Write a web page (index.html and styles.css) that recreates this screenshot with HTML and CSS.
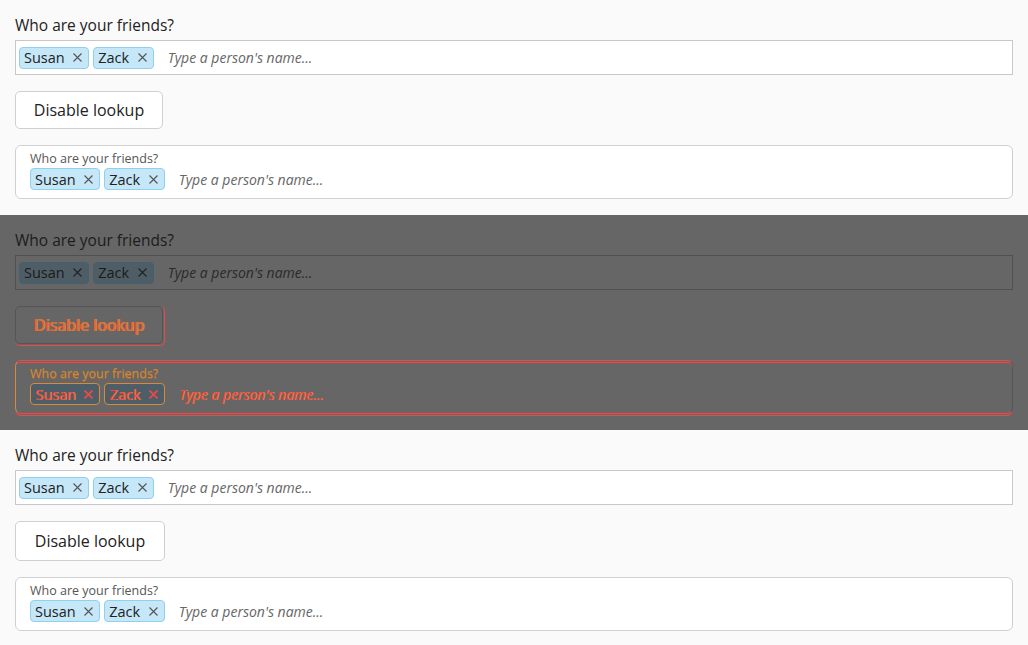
FILE: index.html
```html
<!DOCTYPE html>
<html>
<head>
<meta charset="utf-8">
<link rel="stylesheet" href="styles.css">
</head>
<body>
<section class="panel">
  <div class="label">Who are your friends?</div>
  <div class="input">
    <span class="chip">Susan <svg class="x" viewBox="0 0 9 9"><path d="M0.5 0.5L8.5 8.5M8.5 0.5L0.5 8.5"/></svg></span>
    <span class="chip">Zack <svg class="x" viewBox="0 0 9 9"><path d="M0.5 0.5L8.5 8.5M8.5 0.5L0.5 8.5"/></svg></span>
    <span class="ph">Type a person's name...</span>
  </div>
  <div class="btnrow"><button class="btn">Disable lookup</button></div>
  <div class="field">
    <div class="flabel">Who are your friends?</div>
    <div class="frow">
      <span class="chip">Susan <svg class="x" viewBox="0 0 9 9"><path d="M0.5 0.5L8.5 8.5M8.5 0.5L0.5 8.5"/></svg></span>
      <span class="chip">Zack <svg class="x" viewBox="0 0 9 9"><path d="M0.5 0.5L8.5 8.5M8.5 0.5L0.5 8.5"/></svg></span>
      <span class="ph">Type a person's name...</span>
    </div>
  </div>
</section>
<section class="panel diff">
  <div class="label">Who are your friends?</div>
  <div class="input">
    <span class="chip">Susan <svg class="x" viewBox="0 0 9 9"><path d="M0.5 0.5L8.5 8.5M8.5 0.5L0.5 8.5"/></svg></span>
    <span class="chip">Zack <svg class="x" viewBox="0 0 9 9"><path d="M0.5 0.5L8.5 8.5M8.5 0.5L0.5 8.5"/></svg></span>
    <span class="ph">Type a person's name...</span>
  </div>
  <div class="btnrow"><button class="btn">Disable lookup</button></div>
  <div class="field">
    <div class="flabel">Who are your friends?</div>
    <div class="frow">
      <span class="chip">Susan <svg class="x" viewBox="0 0 9 9"><path d="M0.5 0.5L8.5 8.5M8.5 0.5L0.5 8.5"/></svg></span>
      <span class="chip">Zack <svg class="x" viewBox="0 0 9 9"><path d="M0.5 0.5L8.5 8.5M8.5 0.5L0.5 8.5"/></svg></span>
      <span class="ph">Type a person's name...</span>
    </div>
  </div>
</section>
<section class="panel actual">
  <div class="label">Who are your friends?</div>
  <div class="input">
    <span class="chip">Susan <svg class="x" viewBox="0 0 9 9"><path d="M0.5 0.5L8.5 8.5M8.5 0.5L0.5 8.5"/></svg></span>
    <span class="chip">Zack <svg class="x" viewBox="0 0 9 9"><path d="M0.5 0.5L8.5 8.5M8.5 0.5L0.5 8.5"/></svg></span>
    <span class="ph">Type a person's name...</span>
  </div>
  <div class="btnrow"><button class="btn">Disable lookup</button></div>
  <div class="field">
    <div class="flabel">Who are your friends?</div>
    <div class="frow">
      <span class="chip">Susan <svg class="x" viewBox="0 0 9 9"><path d="M0.5 0.5L8.5 8.5M8.5 0.5L0.5 8.5"/></svg></span>
      <span class="chip">Zack <svg class="x" viewBox="0 0 9 9"><path d="M0.5 0.5L8.5 8.5M8.5 0.5L0.5 8.5"/></svg></span>
      <span class="ph">Type a person's name...</span>
    </div>
  </div>
</section>
</body>
</html>
```
FILE: styles.css
```css
* { box-sizing: border-box; }
html, body { margin: 0; padding: 0; }
body {
  width: 1028px;
  font-family: "Open Sans", "Noto Sans", sans-serif;
  color: #222;
}
.panel {
  height: 215px;
  background: #fafafa;
  padding: 15px 15px 0 15px;
  display: flex;
  flex-direction: column;
}
.label {
  font-size: 15.5px;
  line-height: 21px;
  height: 25px;
  color: #222;
}
.input {
  height: 35px;
  border: 1px solid #c8c8c8;
  background: #fff;
  display: flex;
  align-items: center;
  padding: 0 3px;
  gap: 4px;
}
.chip {
  height: 22px;
  display: inline-flex;
  align-items: center;
  padding: 0 6px 0 4px;
  background: #c5e7f8;
  border: 1px solid #8fd0ef;
  border-radius: 4px;
  font-size: 14.5px;
  color: #222;
  white-space: nowrap;
}
.chip .x {
  width: 9px;
  height: 9px;
  margin-left: 8.5px;
  stroke: #555;
  stroke-width: 1.1;
  fill: none;
}
.ph {
  margin-left: 10px;
  font-size: 14px;
  font-style: italic;
  color: #666;
}
.btnrow {
  margin-top: 16px;
  display: flex;
}
.btn {
  width: 148px;
  height: 38px;
  background: #fff;
  border: 1px solid #d0d0d0;
  border-radius: 5px;
  font-family: inherit;
  font-size: 16px;
  color: #222;
  padding: 0;
}
.field {
  margin-top: 16px;
  height: 54px;
  border: 1px solid #d0d0d0;
  border-radius: 6px;
  background: #fff;
  padding: 5px 14px 0 14px;
  position: relative;
}
.flabel {
  font-size: 12.5px;
  line-height: 15px;
  height: 17px;
  color: #555;
}
.frow {
  display: flex;
  align-items: center;
  gap: 4px;
}
.frow .ph { margin-left: 10px; }

/* actual (bottom) panel */
.actual .btn { width: 150px; height: 40px; }

/* diff panel */
.diff { background: #666; }
.diff .label { color: #1c1c1c; }
.diff .input { background: #666; border-color: #505050; }
.diff .chip { background: #4f5e66; border-color: #3f6273; color: #1a1a1a; }
.diff .chip .x { stroke: #222; }
.diff .ph { color: #2a2a2a; }
.diff .btn {
  background: #666;
  border-color: #555;
  color: #d4703c;
  text-shadow: 1px 0 0 #c8903c, -1px 0 0 #e84848;
  position: relative;
}
.diff .btn::after {
  content: "";
  position: absolute;
  left: -1px;
  top: -1px;
  width: 150px;
  height: 40px;
  border-right: 1px solid #f04848;
  border-bottom: 1px solid #f04848;
  border-radius: 5px;
  box-sizing: border-box;
}
.diff .field {
  background: #666;
  border-color: #f04848 #555 #f04848 #d88a3c;
}
.diff .field::after {
  content: "";
  position: absolute;
  left: -1px;
  right: -1px;
  top: 1px;
  height: 54px;
  border-top: 1px solid #f04848;
  border-bottom: 1px solid #f04848;
  border-radius: 6px;
  box-sizing: border-box;
}
.diff .flabel { color: #d08a3c; text-shadow: 0 1px 0 #a86a34; }
.diff .frow .chip {
  border-color: #d88a3c;
  background: #4f5e66;
  color: #f04848;
  text-shadow: 1px 0 0 #d88a3c;
}
.diff .frow .chip .x { stroke: #f04848; stroke-width: 1.6; }
.diff .frow .ph { color: #f04848; text-shadow: 1px 0 0 #d88a3c; }
```
